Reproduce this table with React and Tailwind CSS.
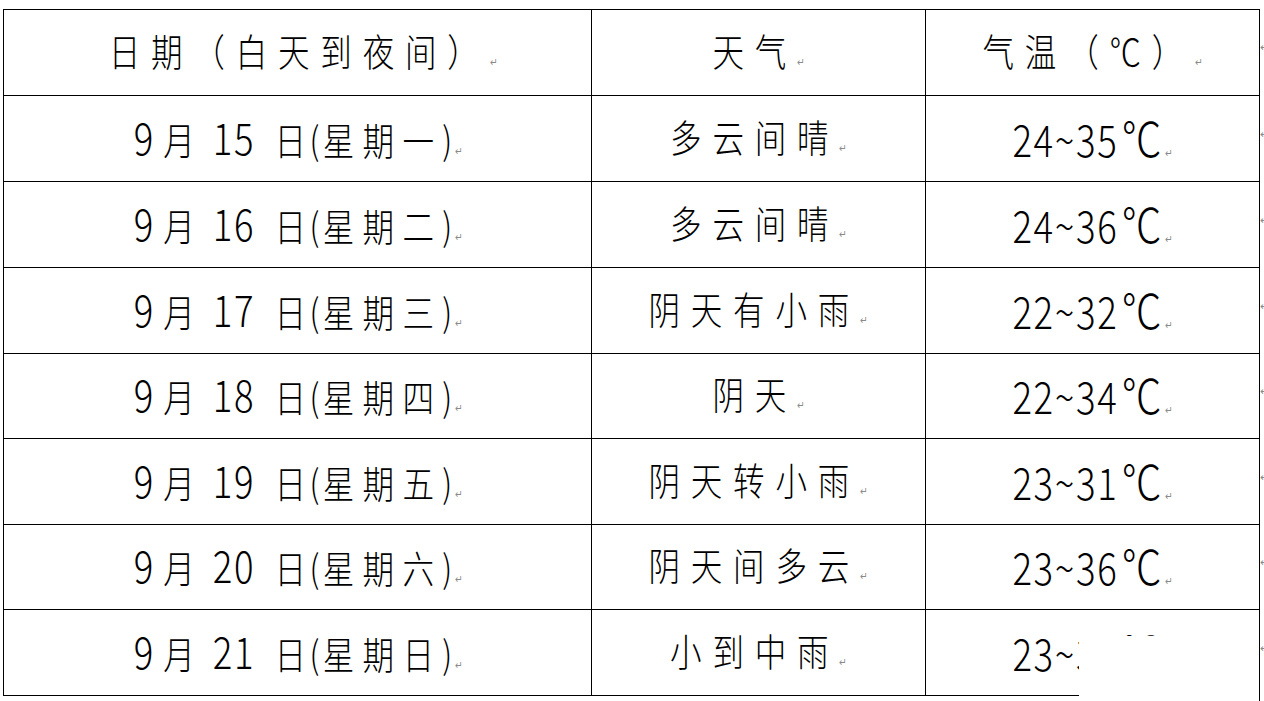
import React from 'react';

const rows = [
  { d: '15', w: '一', weather: '多云间晴', lo: '24', hi: '35', h: 'h-[86px]' },
  { d: '16', w: '二', weather: '多云间晴', lo: '24', hi: '36', h: 'h-[86px]' },
  { d: '17', w: '三', weather: '阴天有小雨', lo: '22', hi: '32', h: 'h-[86px]' },
  { d: '18', w: '四', weather: '阴天', lo: '22', hi: '34', h: 'h-[85px]' },
  { d: '19', w: '五', weather: '阴天转小雨', lo: '23', hi: '31', h: 'h-[86px]' },
  { d: '20', w: '六', weather: '阴天间多云', lo: '23', hi: '36', h: 'h-[85px]' },
  { d: '21', w: '日', weather: '小到中雨', lo: '23', hi: '36', h: 'h-[86px]' },
];

// text pieces: CJK glyphs get wide tracking, digits stay tight
const Cjk = ({ className = 'tracking-[13px]', children }) => (
  <span className={`text-[38px] ${className}`}>{children}</span>
);
const Num = ({ className = '', children }) => (
  <span className={`text-[44px] tracking-[2px] ${className}`}>{children}</span>
);

// Word paragraph mark
const Mark = ({ className = 'ml-[1px]' }) => (
  <span className={`text-[11px] leading-none text-[#8a8a8a] font-['DejaVu_Sans',sans-serif] ${className}`}>↵</span>
);

const Text = ({ children }) => (
  <span className="inline-flex items-baseline whitespace-pre leading-none text-black scale-x-[0.83]">
    {children}
  </span>
);

const Cell = ({ className = '', children }) => (
  <div className={`flex shrink-0 items-center justify-center border-r border-b border-black pb-[6px] ${className}`}>
    {children}
  </div>
);

const RowMark = () => (
  <div className="flex shrink-0 items-center">
    <span className="-mt-[10px] text-[11px] leading-none text-[#8a8a8a] font-['DejaVu_Sans',sans-serif]">↵</span>
  </div>
);

export default function App() {
  return (
    <div className="relative w-[1264px] h-[701px] overflow-hidden bg-white font-['Noto_Sans_CJK_SC','Noto_Sans',sans-serif] font-light">
      <div className="ml-[3px] mt-[9px] flex flex-col">
        {/* header */}
        <div className="flex h-[87px]">
          <Cell className="w-[589px] border-l border-t">
            <Text>
              <Cjk className="ml-[14px] tracking-[13px]">日期（白天到夜间）</Cjk>
              <Mark />
            </Text>
          </Cell>
          <Cell className="w-[334px] border-t">
            <Text>
              <Cjk>天气</Cjk>
              <Mark className="ml-0" />
            </Text>
          </Cell>
          <Cell className="w-[334px] border-t">
            <Text>
              <Cjk>气温（℃）</Cjk>
              <Mark />
            </Text>
          </Cell>
          <RowMark />
        </div>

        {rows.map((r) => (
          <div key={r.d} className={`flex ${r.h}`}>
            <Cell className="w-[589px] border-l">
              <Text>
                <Num className="mr-[10px]">9</Num>
                <Cjk className="tracking-[10px]">月</Cjk>
                <Num>{` ${r.d}  `}</Num>
                <Cjk className="tracking-[4px]">日(</Cjk>
                <Cjk className="tracking-[10px]">{`星期${r.w}`}</Cjk>
                <Cjk className="tracking-[0px]">)</Cjk>
                <Mark className="ml-[3px]" />
              </Text>
            </Cell>
            <Cell className="w-[334px]">
              <Text>
                <Cjk>{r.weather}</Cjk>
                <Mark className="ml-0" />
              </Text>
            </Cell>
            <Cell className="w-[334px]">
              <Text>
                <Num>{`${r.lo}~${r.hi}`}</Num>
                <span className="ml-[4px] text-[48px]">℃</span>
                <Mark className="ml-[4px]" />
              </Text>
            </Cell>
            <RowMark />
          </div>
        ))}
      </div>

      {/* pasted white patch over the bottom-right corner */}
      <div className="absolute left-[1079px] top-[636px] w-[181px] h-[65px] bg-white border-r border-black" />
    </div>
  );
}
